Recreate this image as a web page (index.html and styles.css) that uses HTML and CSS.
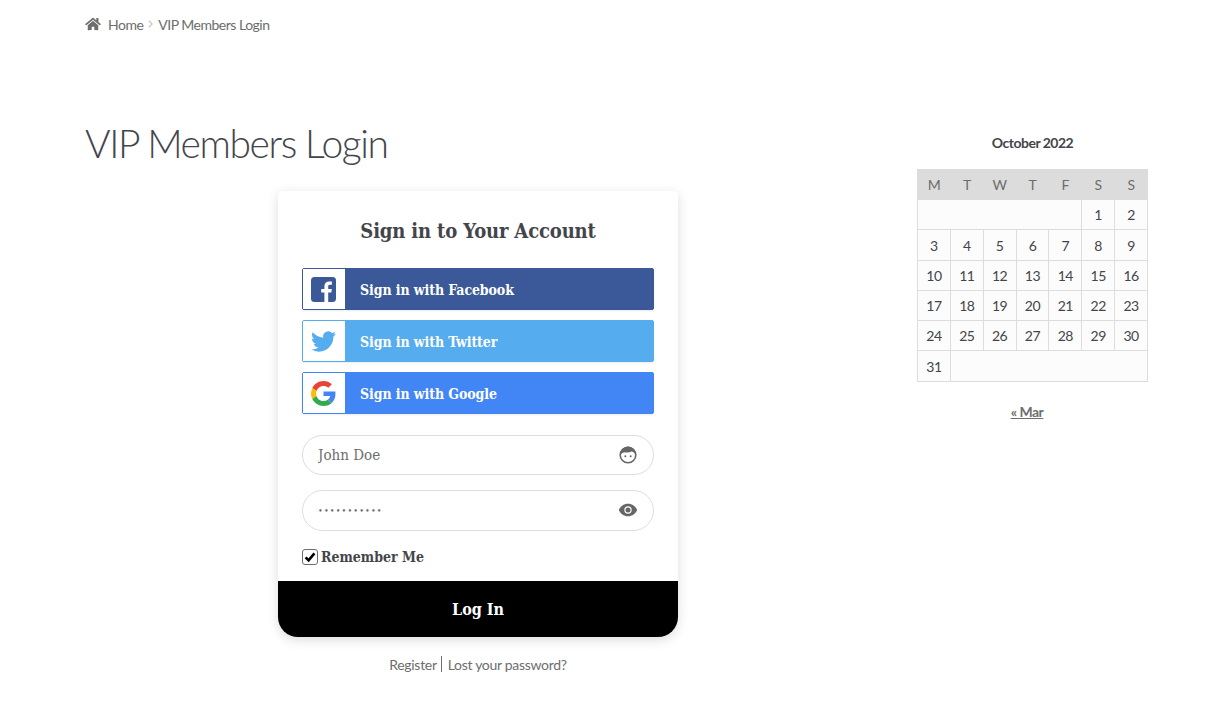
FILE: index.html
```html
<!DOCTYPE html>
<html lang="en">
<head>
    <meta charset="UTF-8">
    <meta name="viewport" content="width=device-width, initial-scale=1.0">
    <title>VIP Members Login</title>
    <link rel="stylesheet" href="styles.css">
</head>
<body>
    <div class="breadcrumb">
        <svg class="home-icon" viewBox="0 0 576 512"><path fill="#6d6d6d" d="M280.37 148.26L96 300.11V464a16 16 0 0 0 16 16l112.06-.29a16 16 0 0 0 15.92-16V368a16 16 0 0 1 16-16h64a16 16 0 0 1 16 16v95.64a16 16 0 0 0 16 16.05L464 480a16 16 0 0 0 16-16V300L295.67 148.26a12.19 12.19 0 0 0-15.3 0zM571.6 251.47L488 182.56V44.05a12 12 0 0 0-12-12h-56a12 12 0 0 0-12 12v72.61L318.47 43a48 48 0 0 0-61 0L4.34 251.47a12 12 0 0 0-1.6 16.9l25.5 31A12 12 0 0 0 45.15 301l235.22-193.74a12.19 12.19 0 0 1 15.3 0L530.9 301a12 12 0 0 0 16.9-1.6l25.5-31a12 12 0 0 0-1.7-16.93z"/></svg>
        <a href="#">Home</a>
        <svg class="crumb-sep" viewBox="0 0 6 10"><path d="M1 1l4 4-4 4" fill="none" stroke="#c8c8c8" stroke-width="1.6"/></svg>
        <span>VIP Members Login</span>
    </div>

    <div class="page">
        <main class="content">
            <h1>VIP Members Login</h1>
            <div class="card">
                <div class="card-body">
                    <h2>Sign in to Your Account</h2>
                    <a href="#" class="social facebook">
                        <span class="social-icon">
                            <svg viewBox="0 0 25 25"><rect width="25" height="25" rx="3.5" fill="#3b5998"/><path fill="#fff" d="M17.2 25v-9.4h3.1l.5-3.7h-3.6V9.6c0-1.1.3-1.8 1.8-1.8h1.9V4.5c-.3 0-1.5-.1-2.8-.1-2.8 0-4.7 1.7-4.7 4.8v2.7H10.2v3.7h3.2V25z"/></svg>
                        </span>
                        <span class="social-label">Sign in with Facebook</span>
                    </a>
                    <a href="#" class="social twitter">
                        <span class="social-icon">
                            <svg viewBox="0 0 24 24"><path fill="#55acee" d="M23.953 4.57a10 10 0 01-2.825.775 4.958 4.958 0 002.163-2.723c-.951.555-2.005.959-3.127 1.184a4.92 4.92 0 00-8.384 4.482C7.69 8.095 4.067 6.13 1.64 3.162a4.822 4.822 0 00-.666 2.475c0 1.71.87 3.213 2.188 4.096a4.904 4.904 0 01-2.228-.616v.06a4.923 4.923 0 003.946 4.827 4.996 4.996 0 01-2.212.085 4.936 4.936 0 004.604 3.417 9.867 9.867 0 01-6.102 2.105c-.39 0-.779-.023-1.17-.067a13.995 13.995 0 007.557 2.209c9.053 0 13.998-7.496 13.998-13.985 0-.21 0-.42-.015-.63A9.935 9.935 0 0024 4.59z"/></svg>
                        </span>
                        <span class="social-label">Sign in with Twitter</span>
                    </a>
                    <a href="#" class="social google">
                        <span class="social-icon">
                            <svg viewBox="0 0 48 48"><path fill="#EA4335" d="M24 9.5c3.54 0 6.71 1.22 9.21 3.6l6.85-6.85C35.9 2.38 30.47 0 24 0 14.62 0 6.51 5.38 2.56 13.22l7.98 6.19C12.43 13.72 17.74 9.5 24 9.5z"/><path fill="#4285F4" d="M46.98 24.55c0-1.57-.15-3.09-.38-4.55H24v9.02h12.94c-.58 2.96-2.26 5.48-4.78 7.18l7.73 6c4.51-4.18 7.09-10.36 7.09-17.65z"/><path fill="#FBBC05" d="M10.53 28.59c-.48-1.45-.76-2.99-.76-4.59s.27-3.14.76-4.59l-7.98-6.19C.92 16.46 0 20.12 0 24c0 3.88.92 7.54 2.56 10.78l7.97-6.19z"/><path fill="#34A853" d="M24 48c6.48 0 11.93-2.13 15.89-5.81l-7.73-6c-2.15 1.45-4.92 2.3-8.16 2.3-6.26 0-11.57-4.22-13.47-9.91l-7.98 6.19C6.51 42.62 14.62 48 24 48z"/></svg>
                        </span>
                        <span class="social-label">Sign in with Google</span>
                    </a>

                    <div class="field field-name">
                        <input type="text" value="John Doe">
                        <svg class="field-icon" viewBox="0 0 20 20"><circle cx="10" cy="10" r="7.8" fill="#fff" stroke="#666" stroke-width="1.6"/><path fill="#666" d="M2.4 9.5C2.2 5 5.6 1.4 10 1.4s7.8 3.6 7.6 8.1c-1-1.9-2.4-3-4.2-3.1-1.6 1-4.4 1.3-6.6.9-1.6.5-3.2.9-4.4 2.2z"/><circle cx="7.3" cy="11.3" r="1" fill="#666"/><circle cx="12.7" cy="11.3" r="1" fill="#666"/></svg>
                    </div>
                    <div class="field field-pass">
                        <input type="password" value="abcdefghijk">
                        <svg class="field-icon" viewBox="0 0 24 24"><path fill="#666" fill-rule="evenodd" d="M12 4.5C7 4.5 2.73 7.61 1 12c1.73 4.39 6 7.5 11 7.5s9.27-3.11 11-7.5c-1.73-4.39-6-7.5-11-7.5zM12 16.4a4.4 4.4 0 1 1 0-8.8 4.4 4.4 0 0 1 0 8.8zM12 9a3 3 0 1 0 0 6 3 3 0 0 0 0-6z"/></svg>
                    </div>

                    <label class="remember">
                        <span class="checkbox">
                            <svg viewBox="0 0 14 14"><path d="M2.6 7.4l3 3 5.8-7" fill="none" stroke="#000" stroke-width="2.6"/></svg>
                        </span>
                        Remember Me
                    </label>
                </div>
                <button type="button" class="login-button">Log In</button>
            </div>
            <p class="card-links"><a href="#">Register</a><span class="divider"></span><a href="#">Lost your password?</a></p>
        </main>

        <aside class="sidebar">
            <div class="cal-title">October 2022</div>
            <table class="calendar">
                <thead>
                    <tr><th>M</th><th>T</th><th>W</th><th>T</th><th>F</th><th>S</th><th>S</th></tr>
                </thead>
                <tbody>
                    <tr><td colspan="5"></td><td>1</td><td>2</td></tr>
                    <tr class="tall"><td>3</td><td>4</td><td>5</td><td>6</td><td>7</td><td>8</td><td>9</td></tr>
                    <tr><td>10</td><td>11</td><td>12</td><td>13</td><td>14</td><td>15</td><td>16</td></tr>
                    <tr><td>17</td><td>18</td><td>19</td><td>20</td><td>21</td><td>22</td><td>23</td></tr>
                    <tr><td>24</td><td>25</td><td>26</td><td>27</td><td>28</td><td>29</td><td>30</td></tr>
                    <tr class="tall"><td>31</td><td colspan="6"></td></tr>
                </tbody>
            </table>
            <div class="cal-nav"><a href="#">&laquo; Mar</a></div>
        </aside>
    </div>
</body>
</html>
```

FILE: styles.css
```css
body {
    font-family: "Lato", "Open Sans", sans-serif;
    margin: 0;
    padding: 0;
    background-color: #ffffff;
    color: #43454b;
    font-size: 14px;
    letter-spacing: -0.5px;
}
a {
    color: #6d6d6d;
    text-decoration: none;
}
.breadcrumb {
    display: flex;
    align-items: center;
    height: 20px;
    padding: 14px 0 1px 85px;
    color: #6d6d6d;
    font-size: 14px;
}
.home-icon {
    width: 16px;
    height: 14px;
    margin-right: 7px;
}
.crumb-sep {
    width: 5px;
    height: 8px;
    margin: 0 5px;
}
.page {
    display: flex;
    justify-content: space-between;
    width: 1063px;
    margin-left: 85px;
}
.content {
    width: 786px;
}
h1 {
    font-size: 39px;
    font-weight: 300;
    line-height: 50px;
    margin: 83px 0 23px;
    color: #43454b;
    letter-spacing: -1.4px;
}
.card {
    width: 400px;
    margin: 0 auto;
    background: #ffffff;
    border-radius: 5px 5px 20px 20px;
    box-shadow: 0 3px 11px rgba(60, 64, 90, 0.18);
    overflow: hidden;
}
.card-body {
    padding: 24px 24px 14px;
}
h2 {
    font-family: "DejaVu Serif", serif;
    font-stretch: condensed;
    font-size: 20px;
    font-weight: 700;
    line-height: 32px;
    margin: 0 0 21px;
    text-align: center;
    color: #43454b;
    letter-spacing: -0.15px;
}
.social {
    display: flex;
    height: 42px;
    margin-bottom: 10px;
    border-radius: 2px;
    color: #ffffff;
    box-sizing: border-box;
    border: 1px solid;
    box-shadow: 0 1px 2px rgba(0, 0, 0, 0.08);
}
.social-icon {
    display: flex;
    align-items: center;
    justify-content: center;
    box-sizing: border-box;
    width: 42px;
    padding-right: 2px;
    background: #ffffff;
}
.social-icon svg {
    width: 25px;
    height: 25px;
}
.social-label {
    flex: 1;
    padding-left: 15px;
    font-family: "DejaVu Serif", serif;
    font-stretch: condensed;
    font-size: 14px;
    font-weight: 700;
    line-height: 42px;
    letter-spacing: -0.1px;
}
.facebook {
    background: #3b5998;
    border-color: #3b5998;
}
.twitter {
    background: #55acee;
    border-color: #55acee;
}
.google {
    background: #4285f4;
    border-color: #4285f4;
}
.field {
    position: relative;
    margin-top: 15px;
}
.field-name {
    margin-top: 21px;
}
.field input {
    display: block;
    width: 100%;
    height: 40px;
    box-sizing: border-box;
    padding: 0 44px 0 15px;
    border: 1px solid #dddddd;
    border-radius: 20px;
    background: #ffffff;
    color: #6d6d6d;
    font-family: "DejaVu Serif", serif;
    font-stretch: condensed;
    font-size: 15px;
    letter-spacing: 0;
    outline: none;
}
.field-pass input {
    height: 41px;
    border-radius: 21px;
    font-size: 9px;
    letter-spacing: 1.1px;
}
.field-icon {
    position: absolute;
    top: 10px;
    right: 16px;
    width: 20px;
    height: 20px;
}
.remember {
    display: flex;
    align-items: center;
    gap: 3px;
    margin-top: 16px;
    height: 20px;
    font-family: "DejaVu Serif", serif;
    font-stretch: condensed;
    font-size: 14px;
    font-weight: 700;
    color: #43454b;
    letter-spacing: 0;
}
.checkbox {
    display: block;
    width: 16px;
    height: 16px;
    box-sizing: border-box;
    border: 1px solid #6d6d6d;
    border-radius: 3px;
    background: #ffffff;
}
.checkbox svg {
    display: block;
    width: 14px;
    height: 14px;
}
.login-button {
    display: block;
    width: 100%;
    height: 56px;
    border: none;
    background: #000000;
    color: #ffffff;
    font-family: "DejaVu Serif", serif;
    font-stretch: condensed;
    font-size: 16px;
    font-weight: 700;
    cursor: pointer;
}
.card-links {
    display: flex;
    justify-content: center;
    align-items: center;
    margin: 17px 0 0;
    height: 20px;
    font-size: 14px;
    letter-spacing: -0.3px;
}
.divider {
    width: 1px;
    height: 16px;
    margin: 0 6px 0 4px;
    background: #6d6d6d;
}
.sidebar {
    width: 231px;
}
.cal-title {
    margin-top: 98px;
    margin-bottom: 16px;
    height: 20px;
    line-height: 20px;
    text-align: center;
    font-size: 14px;
    font-weight: 700;
}
.calendar {
    width: 231px;
    border-collapse: collapse;
    table-layout: fixed;
    font-size: 14px;
}
.calendar th {
    height: 29px;
    padding: 0;
    border: 1px solid #dcdcdc;
    background: #dcdcdc;
    color: #6d6d6d;
    font-weight: 400;
    text-align: center;
}
.calendar td {
    height: 29px;
    padding: 0;
    border: 1px solid #dddddd;
    background: #fcfcfc;
    text-align: center;
}
.calendar .tall td {
    height: 30px;
}
.cal-nav {
    margin-top: 20px;
    padding-right: 11px;
    line-height: 20px;
    text-align: center;
    font-weight: 700;
}
.cal-nav a {
    text-decoration: underline;
}
```
